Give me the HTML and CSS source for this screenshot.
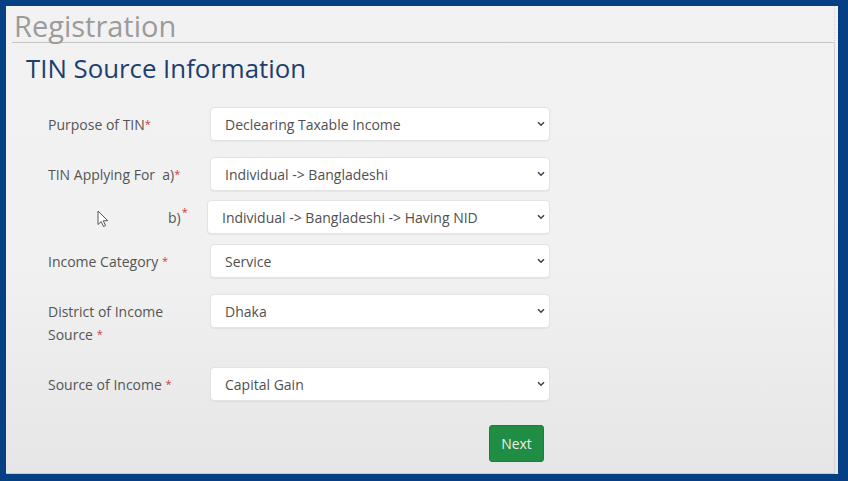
FILE: index.html
```html
<!DOCTYPE html>
<html lang="en">
<head>
<meta charset="utf-8">
<title>Registration</title>
<link rel="stylesheet" href="styles.css">
</head>
<body>
<div class="panel">
  <div class="page-header"><h1 class="page-title">Registration</h1></div>
  <div class="content">
    <h2 class="section-title">TIN Source Information</h2>
    <form class="form">
      <div class="row row-gap-16">
        <label class="label">Purpose of TIN<span class="req">*</span></label>
        <div class="select-wrap">
          <select class="select"><option>Declearing Taxable Income</option></select>
          <svg class="chev" width="8" height="6" viewBox="0 0 8 6"><path d="M1 1.2l3 3 3-3" fill="none" stroke="#3b4654" stroke-width="1.6"/></svg>
        </div>
      </div>
      <div class="row row-gap-9">
        <label class="label">TIN Applying For&nbsp; a)<span class="req">*</span></label>
        <div class="select-wrap">
          <select class="select"><option>Individual -&gt; Bangladeshi</option></select>
          <svg class="chev" width="8" height="6" viewBox="0 0 8 6"><path d="M1 1.2l3 3 3-3" fill="none" stroke="#3b4654" stroke-width="1.6"/></svg>
        </div>
      </div>
      <div class="row row-gap-10">
        <label class="label label-b"><span class="cursor"><svg width="12" height="18" viewBox="0 0 12 18"><path d="M1 1v13.5l3.2-3 2.3 5 2-.9-2.2-4.9h4.4z" fill="#fff" stroke="#555" stroke-width="1" stroke-linejoin="round"/></svg></span>b)<span class="req sup">*</span></label>
        <div class="select-wrap wide">
          <select class="select"><option>Individual -&gt; Bangladeshi -&gt; Having NID</option></select>
          <svg class="chev" width="8" height="6" viewBox="0 0 8 6"><path d="M1 1.2l3 3 3-3" fill="none" stroke="#3b4654" stroke-width="1.6"/></svg>
        </div>
      </div>
      <div class="row row-gap-16">
        <label class="label">Income Category <span class="req">*</span></label>
        <div class="select-wrap">
          <select class="select"><option>Service</option></select>
          <svg class="chev" width="8" height="6" viewBox="0 0 8 6"><path d="M1 1.2l3 3 3-3" fill="none" stroke="#3b4654" stroke-width="1.6"/></svg>
        </div>
      </div>
      <div class="row row-gap-21">
        <label class="label">District of Income<br>Source <span class="req">*</span></label>
        <div class="select-wrap">
          <select class="select"><option>Dhaka</option></select>
          <svg class="chev" width="8" height="6" viewBox="0 0 8 6"><path d="M1 1.2l3 3 3-3" fill="none" stroke="#3b4654" stroke-width="1.6"/></svg>
        </div>
      </div>
      <div class="row row-gap-23">
        <label class="label">Source of Income <span class="req">*</span></label>
        <div class="select-wrap">
          <select class="select"><option>Capital Gain</option></select>
          <svg class="chev" width="8" height="6" viewBox="0 0 8 6"><path d="M1 1.2l3 3 3-3" fill="none" stroke="#3b4654" stroke-width="1.6"/></svg>
        </div>
      </div>
      <div class="actions">
        <button type="button" class="btn-next">Next</button>
      </div>
    </form>
  </div>
</div>
</body>
</html>
```
FILE: styles.css
```css
* { box-sizing: border-box; }
html, body { margin: 0; padding: 0; }
body {
  background: #073f85;
  font-family: "Open Sans", "Liberation Sans", sans-serif;
  width: 848px;
  height: 481px;
  overflow: hidden;
}
.panel {
  margin: 6px 10px 0 6px;
  height: 468px;
  background: linear-gradient(to bottom, #f2f2f2 0%, #f1f1f1 55%, #e6e6e6 100%);
  display: flex;
  flex-direction: column;
}
.page-header {
  height: 37px;
  margin: 0 3px 0 6px;
  padding: 2px 0 0 2px;
  border-bottom: 1px solid #c6c6c6;
  border-right: 1px dotted #cfcfcf;
}
.page-title {
  margin: 0;
  font-size: 29px;
  line-height: 36px;
  font-weight: 400;
  color: #9b9b9b;
}
.content {
  flex: 1;
  margin-right: 3px;
  border-right: 1px solid #d2d2d2;
  border-bottom: 1px solid #c9c9c9;
  padding: 10px 0 0 20px;
}
.section-title {
  margin: 0;
  font-size: 25.8px;
  line-height: 30px;
  font-weight: 500;
  color: #1d3f70;
}
.form {
  margin-top: 24px;
  padding-left: 22px;
}
.row {
  display: grid;
  grid-template-columns: 162px 340px;
  align-items: start;
}
.row-gap-9 { margin-bottom: 9px; }
.row-gap-10 { margin-bottom: 10px; }
.row-gap-16 { margin-bottom: 16px; }
.row-gap-21 { margin-bottom: 21px; }
.row-gap-23 { margin-bottom: 24px; }
.label {
  font-size: 14px;
  line-height: 23px;
  padding-top: 6px;
  color: #555;
}
.label-b {
  position: relative;
  padding-left: 120px;
  height: 34px;
}
.cursor {
  position: absolute;
  left: 49px;
  top: 10px;
  line-height: 0;
}
.req {
  color: #d0403c;
  font-size: 11px;
  line-height: 0;
  vertical-align: 2px;
}
.req.sup {
  position: relative;
  top: -7px;
  vertical-align: baseline;
  margin-left: 1px;
}
.select-wrap {
  position: relative;
  height: 34px;
}
.select-wrap.wide {
  margin-left: -3px;
}
.select {
  appearance: none;
  -webkit-appearance: none;
  width: 100%;
  height: 34px;
  border: 1px solid #e3e3e3;
  border-radius: 4px;
  background: #fff;
  box-shadow: 0 1px 1px rgba(0,0,0,0.05);
  padding: 0 24px 0 14px;
  font-family: "Open Sans", "Liberation Sans", sans-serif;
  font-size: 14px;
  color: #505050;
  outline: none;
}
.chev {
  position: absolute;
  right: 5px;
  top: 14px;
  pointer-events: none;
}
.actions {
  padding-left: 441px;
}
.btn-next {
  width: 55px;
  height: 37px;
  border: 1px solid #1b7f3b;
  border-radius: 3px;
  background: #1f8d43;
  color: #ececec;
  font-family: "Open Sans", "Liberation Sans", sans-serif;
  font-size: 14px;
  padding: 0;
}
```
